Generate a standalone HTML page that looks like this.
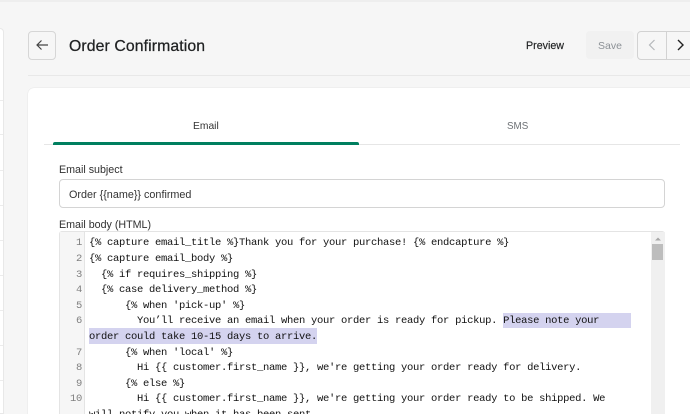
<!DOCTYPE html>
<html lang="en">
<head>
<meta charset="utf-8">
<title>Order Confirmation</title>
<style>
html,body{margin:0;padding:0;width:690px;height:414px;overflow:hidden}
body{background:#f6f6f6;font-family:"Liberation Sans",sans-serif;color:#202223}
#p{position:absolute;left:0;top:0;width:690px;height:414px;overflow:hidden;background:#f6f6f6}
#p div{position:absolute;box-sizing:border-box}
.t{white-space:nowrap;line-height:16px}
.l{left:89px;font:10.5px/15.6px "Liberation Mono",monospace;letter-spacing:-.3px;color:#111;white-space:pre;height:15.6px}
.n{left:59px;width:23px;text-align:right;font:10.5px/15.6px "Liberation Mono",monospace;letter-spacing:-.3px;color:#808080;height:15.6px}
.h{background:#d4d3ef;height:15.6px}
.sl{left:0;width:3px;height:1px;background:#ececec}
</style>
</head>
<body>
<div id="p">
<div style="left:0;top:0;width:690px;height:2px;background:#eeeeee"></div>
<div style="left:-10px;top:28px;width:13.5px;height:386px;background:#fff;border:1px solid #e8e8e8;border-radius:0 4px 0 0"></div>
<div class="sl" style="top:100px"></div><div class="sl" style="top:134px"></div><div class="sl" style="top:170px"></div><div class="sl" style="top:205px"></div><div class="sl" style="top:240px"></div><div class="sl" style="top:275px"></div><div class="sl" style="top:310px"></div><div class="sl" style="top:345px"></div><div class="sl" style="top:380px"></div>

<div style="left:28px;top:31px;width:28px;height:29px;border:1px solid #d6d6d6;border-bottom-width:1.5px;border-radius:4px;background:#f6f6f6"></div>
<svg style="position:absolute;left:35px;top:38px" width="14" height="14" viewBox="0 0 14 14" fill="none" stroke="#444" stroke-width="1.2"><path d="M13 7H2M6.500 2.500L2 7l4.500 4.500"/></svg>
<div class="t" style="left:69px;top:37.500px;font-size:15.800px;line-height:17px;-webkit-text-stroke:.25px #202223;letter-spacing:.1px">Order Confirmation</div>

<div class="t" style="left:526px;top:38px;font-size:10.700px;-webkit-text-stroke:.15px #202223">Preview</div>
<div style="left:586px;top:31px;width:48px;height:28px;background:#f1f1f1;border-radius:4px"></div>
<div class="t" style="left:598px;top:38px;font-size:10.500px;color:#8c9196">Save</div>
<div style="left:637px;top:31px;width:70px;height:29px;border:1px solid #d2d2d2;border-bottom-width:1.500px;border-radius:4px;background:#f6f6f6"></div>
<div style="left:666px;top:32px;width:1px;height:27px;background:#d2d2d2"></div>
<svg style="position:absolute;left:646px;top:38px" width="12" height="14" viewBox="0 0 12 14" fill="none" stroke="#b4b7ba" stroke-width="1.2"><path d="M8.500 2L3.500 7l5 5"/></svg>
<svg style="position:absolute;left:675px;top:38px" width="12" height="14" viewBox="0 0 12 14" fill="none" stroke="#222" stroke-width="1.4"><path d="M3 2l5 5-5 5"/></svg>

<div style="left:28px;top:75px;width:662px;height:1px;background:#e8e8e8"></div>
<div style="left:28px;top:88px;width:680px;height:340px;background:#fff;border-radius:6px;box-shadow:0 0 1px rgba(0,0,0,.18)"></div>

<div style="left:44px;top:144px;width:636px;height:1px;background:#e6e6e6"></div>
<div style="left:53px;top:142px;width:306px;height:3px;background:#007f5f;border-radius:2px 2px 0 0"></div>
<div class="t" style="left:193px;top:119px;font-size:10.300px;color:#333">Email</div>
<div class="t" style="left:507px;top:119px;font-size:9.800px;color:#6d7175">SMS</div>

<div class="t" style="left:59px;top:162px;font-size:10.700px;color:#303030">Email subject</div>
<div style="left:59px;top:179px;width:606px;height:29px;border:1px solid #d4d4d4;border-radius:4px;background:#fff"></div>
<div class="t" style="left:69px;top:187px;font-size:10.800px;color:#333">Order {{name}} confirmed</div>
<div class="t" style="left:59px;top:217px;font-size:10.700px;color:#303030">Email body (HTML)</div>

<div style="left:59px;top:231px;width:606px;height:183px;border:1px solid #e4e4e4;border-bottom:0;border-radius:3px 3px 0 0;background:#fff"></div>
<div style="left:60px;top:232px;width:25px;height:182px;background:#f6f6f6;border-right:1px solid #e4e4e4"></div>
<div style="left:651px;top:232px;width:14px;height:182px;background:#f0f0f0"></div>
<svg style="position:absolute;left:654px;top:236px" width="8" height="6" viewBox="0 0 8 6"><path d="M4 1.500L7 4.500H1z" fill="#a8a8a8"/></svg>
<div style="left:652px;top:244px;width:11px;height:16px;background:#bdbdbd"></div>

<div class="h" style="left:503px;top:312.800px;width:128px"></div>
<div class="h" style="left:89px;top:328.400px;width:228px"></div>

<div class="n" style="top:236px">1</div><div class="l" style="top:236px">{% capture email_title %}Thank you for your purchase! {% endcapture %}</div>
<div class="n" style="top:252px">2</div><div class="l" style="top:252px">{% capture email_body %}</div>
<div class="n" style="top:267.600px">3</div><div class="l" style="top:267.600px">  {% if requires_shipping %}</div>
<div class="n" style="top:283.200px">4</div><div class="l" style="top:283.200px">  {% case delivery_method %}</div>
<div class="n" style="top:298.800px">5</div><div class="l" style="top:298.800px">      {% when 'pick-up' %}</div>
<div class="n" style="top:314.400px">6</div><div class="l" style="top:314.400px">        You’ll receive an email when your order is ready for pickup. Please note your</div>
<div class="l" style="top:330px">order could take 10-15 days to arrive.</div>
<div class="n" style="top:345.600px">7</div><div class="l" style="top:345.600px">      {% when 'local' %}</div>
<div class="n" style="top:361.200px">8</div><div class="l" style="top:361.200px">        Hi {{ customer.first_name }}, we're getting your order ready for delivery.</div>
<div class="n" style="top:376.800px">9</div><div class="l" style="top:376.800px">      {% else %}</div>
<div class="n" style="top:392.400px">10</div><div class="l" style="top:392.400px">        Hi {{ customer.first_name }}, we're getting your order ready to be shipped. We</div>
<div class="l" style="top:408px">will notify you when it has been sent.</div>
</div>
</body>
</html>
